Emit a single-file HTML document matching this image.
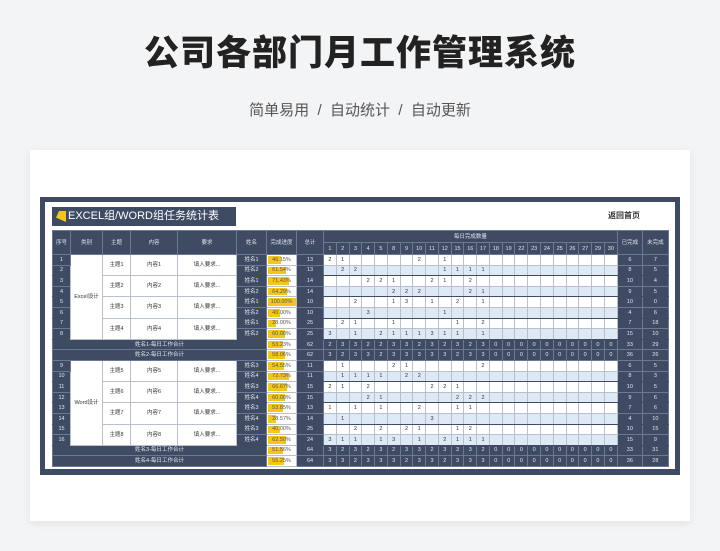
<!DOCTYPE html>
<html><head><meta charset="utf-8">
<style>
*{margin:0;padding:0;box-sizing:border-box}
body{width:720px;height:551px;background:#f3f4f6;font-family:"Liberation Sans","Noto Sans CJK SC",sans-serif;position:relative;overflow:hidden}
.t1{position:absolute;top:25px;left:0;width:720px;text-align:center;font-size:35px;font-weight:900;color:#222;letter-spacing:1px}
.t2{position:absolute;top:99px;left:0;width:720px;text-align:center;font-size:15px;color:#555}
.card{position:absolute;left:30px;top:150px;width:660px;height:371px;background:#fff;box-shadow:0 2px 8px rgba(0,0,0,.08)}
.frame{position:absolute;left:40px;top:197px;width:640px;height:278px;background:#3e4b63}
.inner{position:absolute;left:45px;top:202px;width:630px;height:267px;background:#fff}
.tb{position:absolute;left:52px;top:207px;width:184px;height:19px;background:#3e4b63;color:#fff;font-size:11px;line-height:19px;padding-left:16px}
.flag{position:absolute;left:4px;top:4px;width:10px;height:11px;background:#f5c518;clip-path:polygon(30% 0,100% 0,100% 100%,0 60%)}
.home{position:absolute;left:608px;top:210px;font-size:8px;font-weight:bold;color:#333}
table{position:absolute;left:52px;top:230px;border-collapse:collapse;table-layout:fixed;width:616px}
td{height:10.6px;font-size:5.5px;text-align:center;vertical-align:middle;border:0.6px solid #b7c0cc;color:#333;padding:0;line-height:8px;white-space:nowrap;overflow:hidden}
thead td{background:#3e4b63;color:#dfe4ec;border-color:#6b7a92;height:12px}
.d{background:#3e4b63;color:#e3e7ee;border-color:#6b7a92}
.w{background:#fff}
td.x{background:#fff}
tr.b td.x{background:#dde9f5}
tr.e td{border-bottom:1px solid #3e4b63}
.s td{background:#3e4b63;color:#e3e7ee;border-color:#6b7a92}
.p{position:relative;background:#fff!important;color:#555!important;border-color:#b7c0cc!important}
.p i{position:absolute;left:1px;top:1px;bottom:1px;background:#f5c518;z-index:0}
.p span{position:relative;z-index:1}
</style></head><body>
<div class="t1">公司各部门月工作管理系统</div>
<div class="t2">简单易用 &nbsp;/&nbsp; 自动统计 &nbsp;/&nbsp; 自动更新</div>
<div class="card"></div>
<div class="frame"></div>
<div class="inner"></div>
<div class="tb"><div class="flag"></div>EXCEL组/WORD组任务统计表</div>
<div class="home">返回首页</div>
<table>
<colgroup><col style="width:18px"><col style="width:32px"><col style="width:28px"><col style="width:47px"><col style="width:59px"><col style="width:30px"><col style="width:30px"><col style="width:27px"><col span="23" style="width:12.78px"><col style="width:25px"><col style="width:26px"></colgroup>
<thead>
<tr><td rowspan="2">序号</td><td rowspan="2">类别</td><td rowspan="2">主题</td><td rowspan="2">内容</td><td rowspan="2">要求</td><td rowspan="2">姓名</td><td rowspan="2">完成进度</td><td rowspan="2">总计</td><td colspan="23">每日完成数量</td><td rowspan="2">已完成</td><td rowspan="2">未完成</td></tr>
<tr><td>1</td><td>2</td><td>3</td><td>4</td><td>5</td><td>8</td><td>9</td><td>10</td><td>11</td><td>12</td><td>15</td><td>16</td><td>17</td><td>18</td><td>19</td><td>22</td><td>23</td><td>24</td><td>25</td><td>26</td><td>27</td><td>29</td><td>30</td></tr>
</thead>
<tbody>
<tr><td class="d">1</td><td class="w" rowspan="8">Excel设计</td><td class="w" rowspan="2">主题1</td><td class="w" rowspan="2">内容1</td><td class="w" rowspan="2">填入要求...</td><td class="d">姓名1</td><td class="p"><i style="width:46%"></i><span>46.15%</span></td><td class="d">13</td><td class="x">2</td><td class="x">1</td><td class="x"></td><td class="x"></td><td class="x"></td><td class="x"></td><td class="x"></td><td class="x">2</td><td class="x"></td><td class="x">1</td><td class="x"></td><td class="x"></td><td class="x"></td><td class="x"></td><td class="x"></td><td class="x"></td><td class="x"></td><td class="x"></td><td class="x"></td><td class="x"></td><td class="x"></td><td class="x"></td><td class="x"></td><td class="d">6</td><td class="d">7</td></tr>
<tr class="b e"><td class="d">2</td><td class="d">姓名2</td><td class="p"><i style="width:61%"></i><span>61.54%</span></td><td class="d">13</td><td class="x"></td><td class="x">2</td><td class="x">2</td><td class="x"></td><td class="x"></td><td class="x"></td><td class="x"></td><td class="x"></td><td class="x"></td><td class="x">1</td><td class="x">1</td><td class="x">1</td><td class="x">1</td><td class="x"></td><td class="x"></td><td class="x"></td><td class="x"></td><td class="x"></td><td class="x"></td><td class="x"></td><td class="x"></td><td class="x"></td><td class="x"></td><td class="d">8</td><td class="d">5</td></tr>
<tr><td class="d">3</td><td class="w" rowspan="2">主题2</td><td class="w" rowspan="2">内容2</td><td class="w" rowspan="2">填入要求...</td><td class="d">姓名1</td><td class="p"><i style="width:71%"></i><span>71.43%</span></td><td class="d">14</td><td class="x"></td><td class="x"></td><td class="x"></td><td class="x">2</td><td class="x">2</td><td class="x">1</td><td class="x"></td><td class="x"></td><td class="x">2</td><td class="x">1</td><td class="x"></td><td class="x">2</td><td class="x"></td><td class="x"></td><td class="x"></td><td class="x"></td><td class="x"></td><td class="x"></td><td class="x"></td><td class="x"></td><td class="x"></td><td class="x"></td><td class="x"></td><td class="d">10</td><td class="d">4</td></tr>
<tr class="b e"><td class="d">4</td><td class="d">姓名2</td><td class="p"><i style="width:64%"></i><span>64.29%</span></td><td class="d">14</td><td class="x"></td><td class="x"></td><td class="x"></td><td class="x"></td><td class="x"></td><td class="x">2</td><td class="x">2</td><td class="x">2</td><td class="x"></td><td class="x"></td><td class="x"></td><td class="x">2</td><td class="x">1</td><td class="x"></td><td class="x"></td><td class="x"></td><td class="x"></td><td class="x"></td><td class="x"></td><td class="x"></td><td class="x"></td><td class="x"></td><td class="x"></td><td class="d">9</td><td class="d">5</td></tr>
<tr><td class="d">5</td><td class="w" rowspan="2">主题3</td><td class="w" rowspan="2">内容3</td><td class="w" rowspan="2">填入要求...</td><td class="d">姓名1</td><td class="p"><i style="width:96%"></i><span>100.00%</span></td><td class="d">10</td><td class="x"></td><td class="x"></td><td class="x">2</td><td class="x"></td><td class="x"></td><td class="x">1</td><td class="x">3</td><td class="x"></td><td class="x">1</td><td class="x"></td><td class="x">2</td><td class="x"></td><td class="x">1</td><td class="x"></td><td class="x"></td><td class="x"></td><td class="x"></td><td class="x"></td><td class="x"></td><td class="x"></td><td class="x"></td><td class="x"></td><td class="x"></td><td class="d">10</td><td class="d">0</td></tr>
<tr class="b e"><td class="d">6</td><td class="d">姓名2</td><td class="p"><i style="width:40%"></i><span>40.00%</span></td><td class="d">10</td><td class="x"></td><td class="x"></td><td class="x"></td><td class="x">3</td><td class="x"></td><td class="x"></td><td class="x"></td><td class="x"></td><td class="x"></td><td class="x">1</td><td class="x"></td><td class="x"></td><td class="x"></td><td class="x"></td><td class="x"></td><td class="x"></td><td class="x"></td><td class="x"></td><td class="x"></td><td class="x"></td><td class="x"></td><td class="x"></td><td class="x"></td><td class="d">4</td><td class="d">6</td></tr>
<tr><td class="d">7</td><td class="w" rowspan="2">主题4</td><td class="w" rowspan="2">内容4</td><td class="w" rowspan="2">填入要求...</td><td class="d">姓名1</td><td class="p"><i style="width:28%"></i><span>28.00%</span></td><td class="d">25</td><td class="x"></td><td class="x">2</td><td class="x">1</td><td class="x"></td><td class="x"></td><td class="x">1</td><td class="x"></td><td class="x"></td><td class="x"></td><td class="x"></td><td class="x">1</td><td class="x"></td><td class="x">2</td><td class="x"></td><td class="x"></td><td class="x"></td><td class="x"></td><td class="x"></td><td class="x"></td><td class="x"></td><td class="x"></td><td class="x"></td><td class="x"></td><td class="d">7</td><td class="d">18</td></tr>
<tr class="b e"><td class="d">8</td><td class="d">姓名2</td><td class="p"><i style="width:60%"></i><span>60.00%</span></td><td class="d">25</td><td class="x">3</td><td class="x"></td><td class="x">1</td><td class="x"></td><td class="x">2</td><td class="x">1</td><td class="x">1</td><td class="x">1</td><td class="x">3</td><td class="x">1</td><td class="x">1</td><td class="x"></td><td class="x">1</td><td class="x"></td><td class="x"></td><td class="x"></td><td class="x"></td><td class="x"></td><td class="x"></td><td class="x"></td><td class="x"></td><td class="x"></td><td class="x"></td><td class="d">15</td><td class="d">10</td></tr>
<tr class="s"><td colspan="6">姓名1-每日工作合计</td><td class="p"><i style="width:53%"></i><span>53.23%</span></td><td>62</td><td>2</td><td>3</td><td>3</td><td>2</td><td>2</td><td>3</td><td>3</td><td>2</td><td>3</td><td>2</td><td>3</td><td>2</td><td>3</td><td>0</td><td>0</td><td>0</td><td>0</td><td>0</td><td>0</td><td>0</td><td>0</td><td>0</td><td>0</td><td>33</td><td>29</td></tr>
<tr class="s"><td colspan="6">姓名2-每日工作合计</td><td class="p"><i style="width:58%"></i><span>58.06%</span></td><td>62</td><td>3</td><td>2</td><td>3</td><td>3</td><td>2</td><td>3</td><td>3</td><td>3</td><td>3</td><td>3</td><td>2</td><td>3</td><td>3</td><td>0</td><td>0</td><td>0</td><td>0</td><td>0</td><td>0</td><td>0</td><td>0</td><td>0</td><td>0</td><td>36</td><td>26</td></tr>
<tr><td class="d">9</td><td class="w" rowspan="8">Word设计</td><td class="w" rowspan="2">主题5</td><td class="w" rowspan="2">内容5</td><td class="w" rowspan="2">填入要求...</td><td class="d">姓名3</td><td class="p"><i style="width:54%"></i><span>54.55%</span></td><td class="d">11</td><td class="x"></td><td class="x">1</td><td class="x"></td><td class="x"></td><td class="x"></td><td class="x">2</td><td class="x">1</td><td class="x"></td><td class="x"></td><td class="x"></td><td class="x"></td><td class="x"></td><td class="x">2</td><td class="x"></td><td class="x"></td><td class="x"></td><td class="x"></td><td class="x"></td><td class="x"></td><td class="x"></td><td class="x"></td><td class="x"></td><td class="x"></td><td class="d">6</td><td class="d">5</td></tr>
<tr class="b e"><td class="d">10</td><td class="d">姓名4</td><td class="p"><i style="width:72%"></i><span>72.73%</span></td><td class="d">11</td><td class="x"></td><td class="x">1</td><td class="x">1</td><td class="x">1</td><td class="x">1</td><td class="x"></td><td class="x">2</td><td class="x">2</td><td class="x"></td><td class="x"></td><td class="x"></td><td class="x"></td><td class="x"></td><td class="x"></td><td class="x"></td><td class="x"></td><td class="x"></td><td class="x"></td><td class="x"></td><td class="x"></td><td class="x"></td><td class="x"></td><td class="x"></td><td class="d">8</td><td class="d">3</td></tr>
<tr><td class="d">11</td><td class="w" rowspan="2">主题6</td><td class="w" rowspan="2">内容6</td><td class="w" rowspan="2">填入要求...</td><td class="d">姓名3</td><td class="p"><i style="width:66%"></i><span>66.67%</span></td><td class="d">15</td><td class="x">2</td><td class="x">1</td><td class="x"></td><td class="x">2</td><td class="x"></td><td class="x"></td><td class="x"></td><td class="x"></td><td class="x">2</td><td class="x">2</td><td class="x">1</td><td class="x"></td><td class="x"></td><td class="x"></td><td class="x"></td><td class="x"></td><td class="x"></td><td class="x"></td><td class="x"></td><td class="x"></td><td class="x"></td><td class="x"></td><td class="x"></td><td class="d">10</td><td class="d">5</td></tr>
<tr class="b e"><td class="d">12</td><td class="d">姓名4</td><td class="p"><i style="width:60%"></i><span>60.00%</span></td><td class="d">15</td><td class="x"></td><td class="x"></td><td class="x"></td><td class="x">2</td><td class="x">1</td><td class="x"></td><td class="x"></td><td class="x"></td><td class="x"></td><td class="x"></td><td class="x">2</td><td class="x">2</td><td class="x">2</td><td class="x"></td><td class="x"></td><td class="x"></td><td class="x"></td><td class="x"></td><td class="x"></td><td class="x"></td><td class="x"></td><td class="x"></td><td class="x"></td><td class="d">9</td><td class="d">6</td></tr>
<tr><td class="d">13</td><td class="w" rowspan="2">主题7</td><td class="w" rowspan="2">内容7</td><td class="w" rowspan="2">填入要求...</td><td class="d">姓名3</td><td class="p"><i style="width:53%"></i><span>53.85%</span></td><td class="d">13</td><td class="x">1</td><td class="x"></td><td class="x">1</td><td class="x"></td><td class="x">1</td><td class="x"></td><td class="x"></td><td class="x">2</td><td class="x"></td><td class="x"></td><td class="x">1</td><td class="x">1</td><td class="x"></td><td class="x"></td><td class="x"></td><td class="x"></td><td class="x"></td><td class="x"></td><td class="x"></td><td class="x"></td><td class="x"></td><td class="x"></td><td class="x"></td><td class="d">7</td><td class="d">6</td></tr>
<tr class="b e"><td class="d">14</td><td class="d">姓名4</td><td class="p"><i style="width:28%"></i><span>28.57%</span></td><td class="d">14</td><td class="x"></td><td class="x">1</td><td class="x"></td><td class="x"></td><td class="x"></td><td class="x"></td><td class="x"></td><td class="x"></td><td class="x">3</td><td class="x"></td><td class="x"></td><td class="x"></td><td class="x"></td><td class="x"></td><td class="x"></td><td class="x"></td><td class="x"></td><td class="x"></td><td class="x"></td><td class="x"></td><td class="x"></td><td class="x"></td><td class="x"></td><td class="d">4</td><td class="d">10</td></tr>
<tr><td class="d">15</td><td class="w" rowspan="2">主题8</td><td class="w" rowspan="2">内容8</td><td class="w" rowspan="2">填入要求...</td><td class="d">姓名3</td><td class="p"><i style="width:40%"></i><span>40.00%</span></td><td class="d">25</td><td class="x"></td><td class="x"></td><td class="x">2</td><td class="x"></td><td class="x">2</td><td class="x"></td><td class="x">2</td><td class="x">1</td><td class="x"></td><td class="x"></td><td class="x">1</td><td class="x">2</td><td class="x"></td><td class="x"></td><td class="x"></td><td class="x"></td><td class="x"></td><td class="x"></td><td class="x"></td><td class="x"></td><td class="x"></td><td class="x"></td><td class="x"></td><td class="d">10</td><td class="d">15</td></tr>
<tr class="b e"><td class="d">16</td><td class="d">姓名4</td><td class="p"><i style="width:62%"></i><span>62.50%</span></td><td class="d">24</td><td class="x">3</td><td class="x">1</td><td class="x">1</td><td class="x"></td><td class="x">1</td><td class="x">3</td><td class="x"></td><td class="x">1</td><td class="x"></td><td class="x">2</td><td class="x">1</td><td class="x">1</td><td class="x">1</td><td class="x"></td><td class="x"></td><td class="x"></td><td class="x"></td><td class="x"></td><td class="x"></td><td class="x"></td><td class="x"></td><td class="x"></td><td class="x"></td><td class="d">15</td><td class="d">9</td></tr>
<tr class="s"><td colspan="6">姓名3-每日工作合计</td><td class="p"><i style="width:51%"></i><span>51.56%</span></td><td>64</td><td>3</td><td>2</td><td>3</td><td>2</td><td>3</td><td>2</td><td>3</td><td>3</td><td>2</td><td>3</td><td>3</td><td>3</td><td>2</td><td>0</td><td>0</td><td>0</td><td>0</td><td>0</td><td>0</td><td>0</td><td>0</td><td>0</td><td>0</td><td>33</td><td>31</td></tr>
<tr class="s"><td colspan="6">姓名4-每日工作合计</td><td class="p"><i style="width:56%"></i><span>56.25%</span></td><td>64</td><td>3</td><td>3</td><td>2</td><td>3</td><td>3</td><td>3</td><td>2</td><td>3</td><td>3</td><td>2</td><td>3</td><td>3</td><td>3</td><td>0</td><td>0</td><td>0</td><td>0</td><td>0</td><td>0</td><td>0</td><td>0</td><td>0</td><td>0</td><td>36</td><td>28</td></tr>
</tbody>
</table>
</body></html>
